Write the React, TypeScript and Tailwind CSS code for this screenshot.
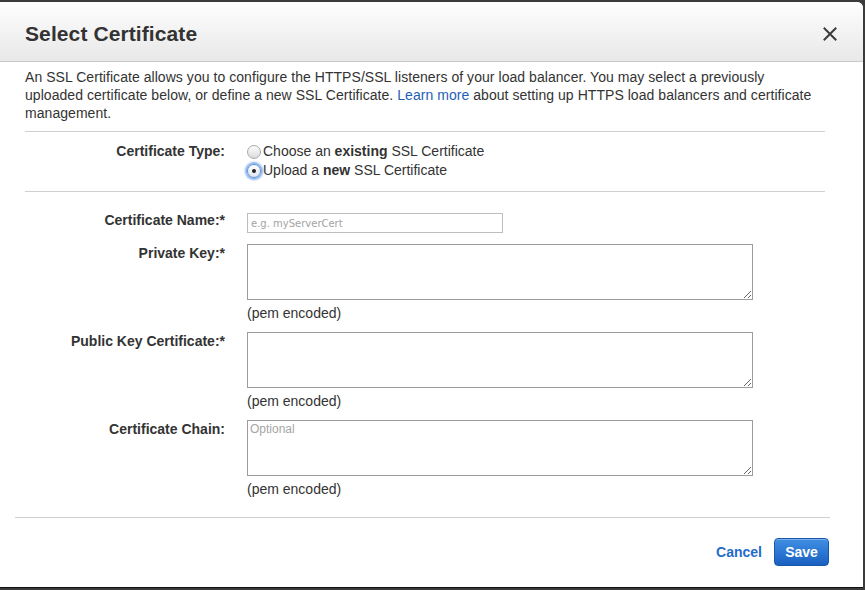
import React from "react";

const font = { fontFamily: '"Liberation Sans", Arial, Helvetica, sans-serif' };

function Radio({ checked }: { checked?: boolean }) {
  if (checked) {
    return (
      <span className="mr-[2px] flex h-[14px] w-[14px] shrink-0 items-center justify-center rounded-full border border-[#5d8fd6] bg-gradient-to-b from-[#ffffff] to-[#dfe6ef] shadow-[0_0_2px_2px_rgba(90,150,230,0.75)]">
        <span className="h-[4px] w-[4px] rounded-full bg-[#222]" />
      </span>
    );
  }
  return (
    <span className="mr-[2px] h-[14px] w-[14px] shrink-0 rounded-full border border-[#a8a8a8] bg-gradient-to-b from-[#ffffff] to-[#dadada]" />
  );
}

function Label({ children, className = "" }: { children: React.ReactNode; className?: string }) {
  return (
    <div className={"w-[200px] shrink-0 text-right text-[14px] font-bold leading-[18px] text-[#333] " + className}>
      {children}
    </div>
  );
}

function PemField({ label, placeholder }: { label: string; placeholder?: string }) {
  return (
    <div className="flex pb-[10px]">
      <Label>{label}</Label>
      <div className="ml-[22px] flex flex-col">
        <textarea
          placeholder={placeholder}
          className="h-[56px] w-[506px] resize border border-[#9c9c9c] bg-white px-[2px] py-[1px] text-[12px] leading-[15px] text-[#333] outline-none placeholder:text-[#a6a6a6]"
          style={font}
        />
        <div className="mt-[4px] text-[14px] leading-[18px] text-[#333]">(pem encoded)</div>
      </div>
    </div>
  );
}

export default function App() {
  return (
    <div className="h-[590px] w-[865px] overflow-hidden bg-[#3b3b3b] pt-[2px]" style={font}>
      <div className="flex h-[586px] w-[863px] flex-col rounded-tr-[6px] border-b border-[#111] bg-white">
        <div className="flex h-[60px] shrink-0 items-center justify-between rounded-tr-[6px] border-b border-[#c9c9c9] bg-gradient-to-b from-[#fefefe] to-[#e8e8e8] pl-[25px] pr-[26px] pt-[4px]">
          <h1 className="text-[21px] font-bold tracking-[0.1px] text-[#333]">Select Certificate</h1>
          <svg width="14" height="14" viewBox="0 0 14 14">
            <path d="M1.5 1.5 L12.5 12.5 M12.5 1.5 L1.5 12.5" stroke="#3c3c3c" strokeWidth="2" strokeLinecap="square" />
          </svg>
        </div>

        <div className="px-[25px]">
          <p className="mt-[6px] text-[14px] leading-[18px] tracking-[0.05px] text-[#333]">
            An SSL Certificate allows you to configure the HTTPS/SSL listeners of your load balancer. You may select a previously
            <br />
            uploaded certificate below, or define a new SSL Certificate.{" "}
            <a href="#learn" className="text-[#1e5fb8]">Learn more</a> about setting up HTTPS load balancers and certificate
            <br />
            management.
          </p>
          <div className="mt-[9px] h-px w-[800px] bg-[#cfcfcf]" />

          <div className="flex pt-[10px]">
            <Label>Certificate Type:</Label>
            <div className="ml-[22px] flex flex-col text-[14px] leading-[19px] text-[#333]">
              <div className="flex items-center">
                <Radio />
                <span>
                  Choose an <b>existing</b> SSL Certificate
                </span>
              </div>
              <div className="flex items-center">
                <Radio checked />
                <span>
                  Upload a <b>new</b> SSL Certificate
                </span>
              </div>
            </div>
          </div>
          <div className="mt-[11px] h-px w-[800px] bg-[#cfcfcf]" />

          <div className="flex pt-[21px]">
            <Label className="-mt-[2px]">Certificate Name:*</Label>
            <input
              placeholder="e.g. myServerCert"
              className="ml-[22px] h-[20px] w-[256px] border border-[#bdbdbd] bg-white px-[3px] text-[10px] text-[#333] outline-none placeholder:text-[#a3a3a3]"
              style={{ fontFamily: '"DejaVu Sans", Verdana, sans-serif' }}
            />
          </div>

          <div className="pt-[11px]">
            <PemField label="Private Key:*" />
            <PemField label="Public Key Certificate:*" />
            <PemField label="Certificate Chain:" placeholder="Optional" />
          </div>
        </div>

        <div className="mx-[15px] mt-[9px] h-px w-[815px] bg-[#cfcfcf]" />

        <div className="flex items-center justify-end gap-[12px] pr-[34px] pt-[20px]">
          <a href="#cancel" className="text-[14px] font-bold text-[#1f6cc9]">Cancel</a>
          <button className="h-[28px] w-[55px] rounded-[4px] border border-[#1b58ab] bg-gradient-to-b from-[#3f8fe3] to-[#1a60c2] text-[14px] font-bold text-white shadow-[inset_0_1px_0_rgba(255,255,255,0.3)]">
            Save
          </button>
        </div>
      </div>
    </div>
  );
}
